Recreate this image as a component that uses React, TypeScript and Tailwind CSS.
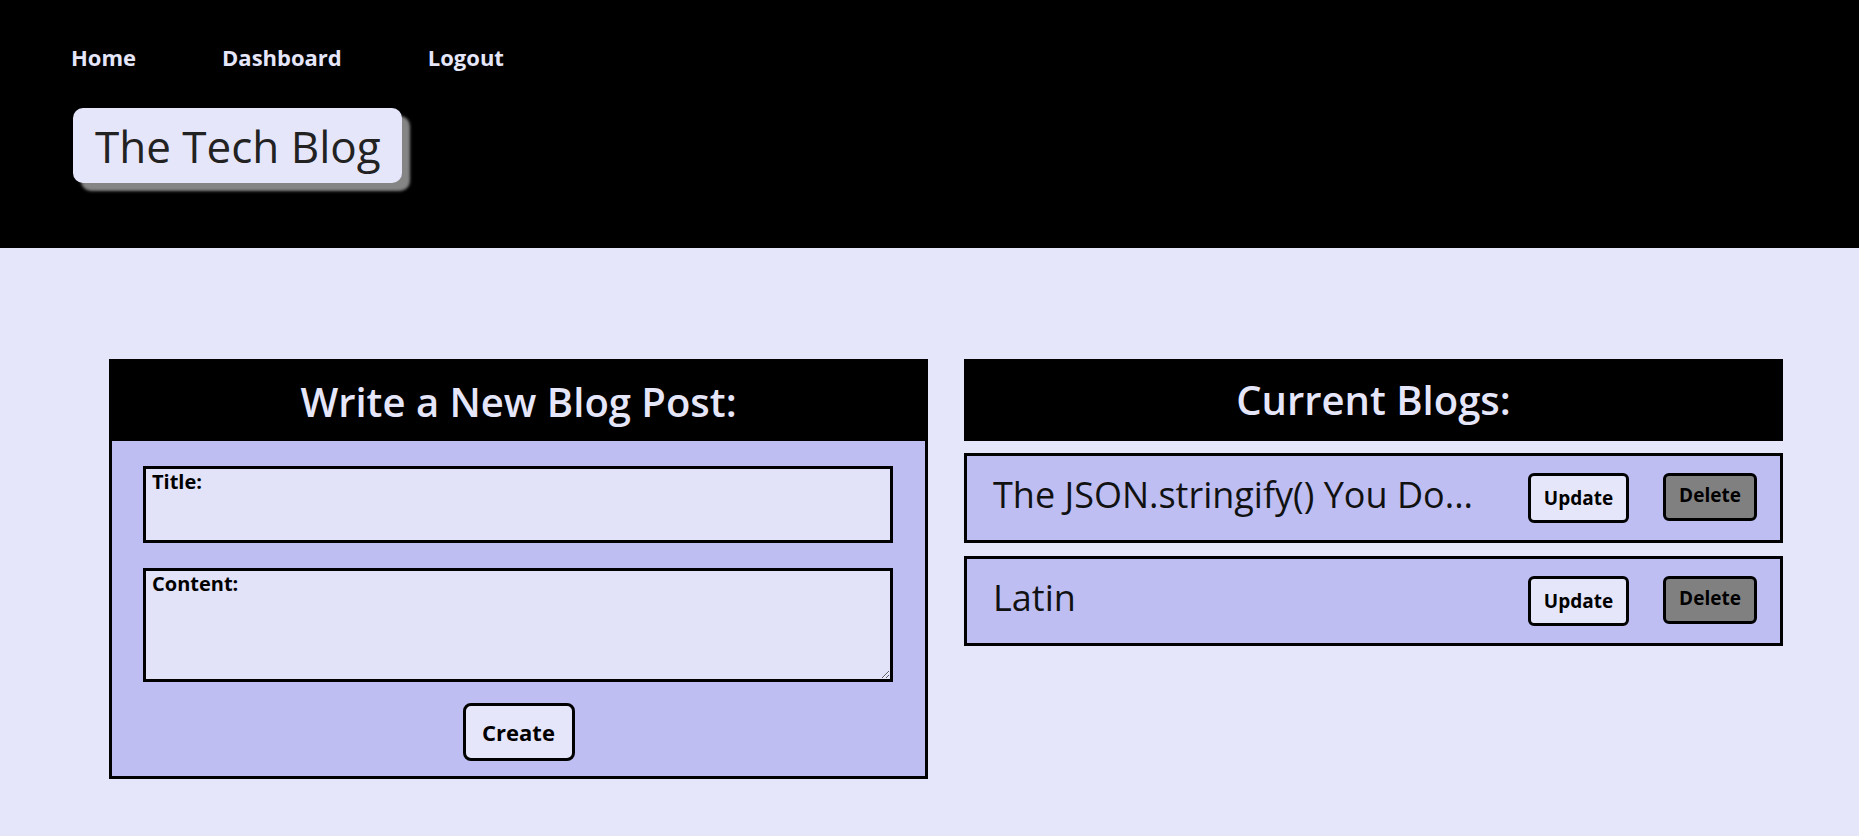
import { useState } from 'react'

const NAV = ['Home', 'Dashboard', 'Logout']

const BLOGS = [
  { id: 1, title: 'The JSON.stringify() You Do...' },
  { id: 2, title: 'Latin' },
]

export default function App() {
  const [title, setTitle] = useState('')
  const [content, setContent] = useState('')

  return (
    <div className="h-[836px] overflow-hidden bg-[#e6e6fa] font-['Open_Sans',sans-serif] text-black">
      {/* Header */}
      <header className="h-[248px] bg-black pt-[42px]">
        <nav className="flex gap-[86px] pl-[71px]">
          {NAV.map((item) => (
            <a key={item} href="#" className="text-[22px] font-bold leading-[30px] text-[#e6e6fa]">
              {item}
            </a>
          ))}
        </nav>
        <div className="ml-[73px] mt-[36px] flex h-[75px] w-[329px] items-center rounded-[10px] bg-[#e6e6fa] pl-[22px] shadow-[8px_8px_3px_#858585]">
          <h1 className="text-[44px] leading-none text-[#222222]">The Tech Blog</h1>
        </div>
      </header>

      {/* Main */}
      <main className="flex gap-[36px] pl-[109px] pt-[111px]">
        {/* New post form */}
        <section className="w-[819px] border-[3px] border-black bg-[#bebef2]">
          <div className="flex h-[79px] items-center justify-center bg-black">
            <h2 className="text-[40px] font-semibold text-[#e6e6fa]">Write a New Blog Post:</h2>
          </div>
          <form className="flex flex-col px-[31px] pb-[15px] pt-[25px]" onSubmit={(e) => e.preventDefault()}>
            <label className="flex h-[77px] w-[750px] flex-col border-[3px] border-black bg-[#e2e2f8] pl-[6px] pt-[2px]">
              <span className="text-[20px] font-bold leading-[22px]">Title:</span>
              <input
                value={title}
                onChange={(e) => setTitle(e.target.value)}
                className="flex-1 bg-transparent text-[18px] outline-none"
              />
            </label>
            <label className="mt-[25px] flex h-[114px] w-[750px] flex-col border-[3px] border-black bg-[#e2e2f8] pl-[6px] pt-[2px]">
              <span className="text-[20px] font-bold leading-[22px]">Content:</span>
              <textarea
                value={content}
                onChange={(e) => setContent(e.target.value)}
                className="flex-1 resize bg-transparent text-[18px] outline-none"
              />
            </label>
            <button
              type="submit"
              className="mx-auto mt-[21px] h-[58px] w-[112px] rounded-[8px] border-[3px] border-black bg-[#e6e6fa] text-[22px] font-bold"
            >
              Create
            </button>
          </form>
        </section>

        {/* Current blogs */}
        <section className="flex w-[819px] flex-col">
          <div className="flex h-[82px] items-center justify-center bg-black">
            <h2 className="text-[40px] font-semibold text-[#e6e6fa]">Current Blogs:</h2>
          </div>
          <ul className="mt-[12px] flex flex-col gap-[13px]">
            {BLOGS.map((blog) => (
              <li
                key={blog.id}
                className="flex h-[90px] items-center border-[3px] border-black bg-[#bebef2] pl-[26px] pr-[23px]"
              >
                <span className="flex-1 pb-[6px] text-[36px] text-[#111111]">{blog.title}</span>
                <button className="h-[50px] w-[101px] rounded-[6px] border-[3px] border-black bg-[#e6e6fa] text-[19px] font-bold">
                  Update
                </button>
                <button className="ml-[34px] mb-[2px] h-[48px] w-[94px] rounded-[6px] border-[3px] border-black bg-[#808080] pb-[3px] text-[19px] font-bold">
                  Delete
                </button>
              </li>
            ))}
          </ul>
        </section>
      </main>
    </div>
  )
}
